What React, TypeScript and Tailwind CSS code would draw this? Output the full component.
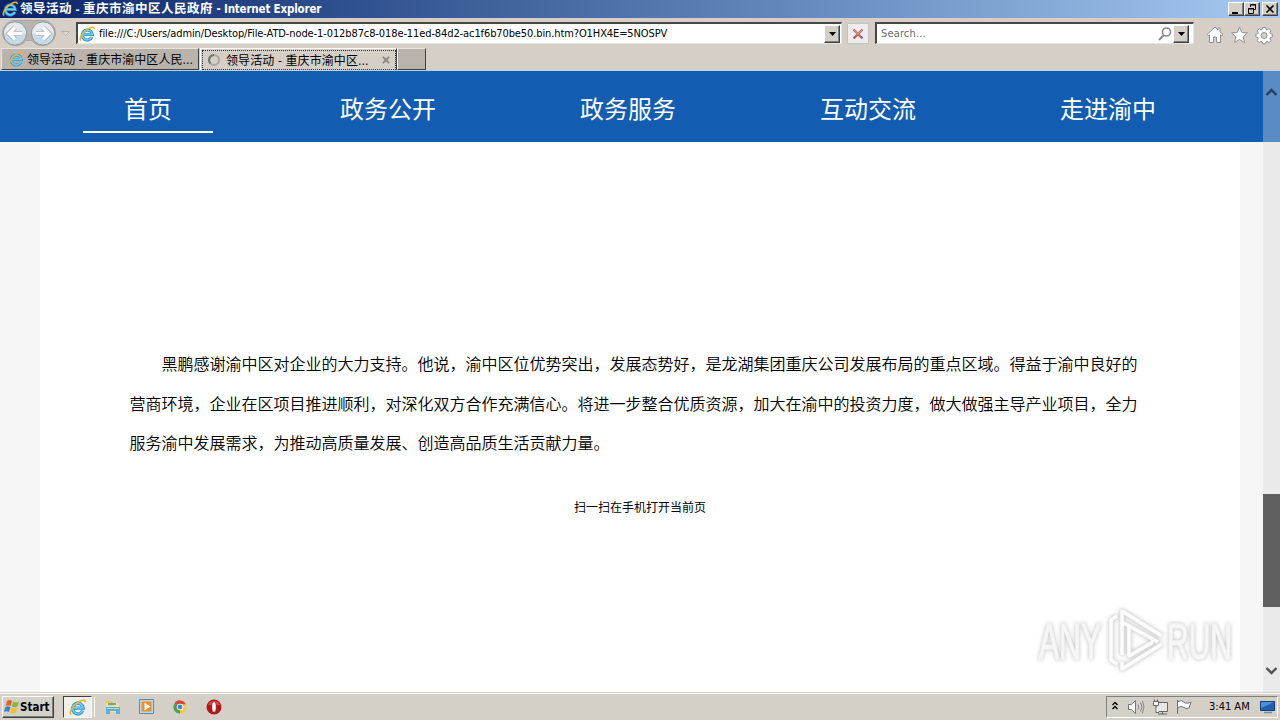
import clsx from 'clsx'

const address = 'file:///C:/Users/admin/Desktop/File-ATD-node-1-012b87c8-018e-11ed-84d2-ac1f6b70be50.bin.htm?O1HX4E=5NOSPV'
const menu = ['首页', '政务公开', '政务服务', '互动交流', '走进渝中']
const lines = [
    '黑鹏感谢渝中区对企业的大力支持。他说，渝中区位优势突出，发展态势好，是龙湖集团重庆公司发展布局的重点区域。得益于渝中良好的',
    '营商环境，企业在区项目推进顺利，对深化双方合作充满信心。将进一步整合优质资源，加大在渝中的投资力度，做大做强主导产业项目，全力',
    '服务渝中发展需求，为推动高质量发展、创造高品质生活贡献力量。',
]

const raised = 'border border-t-white border-l-white border-r-[#404040] border-b-[#404040] bg-[#d4d0c8] shadow-[inset_-1px_-1px_0_#808080]'

function IeIcon({ size = 16, className = '' }: { size?: number; className?: string }) {
    return (
        <svg width={size} height={size} viewBox="0 0 16 16" className={clsx('shrink-0', className)} fill="none">
            <path d="M12.900 11A5 5 0 1 1 13.300 8.500H4.500" stroke="#2a8acb" strokeWidth="3.100" />
            <path d="M12.800 10.900A4.900 4.900 0 1 1 13.200 8.400H4.500" stroke="#6fcdf2" strokeWidth="1.700" />
            <path d="M2.200 14.500C-.5 13 2.800 7.600 7.200 4.200 11 1.200 15.700-.4 15.200 3.200" stroke="#e9b524" strokeWidth="1.500" />
        </svg>
    )
}

function DropButton({ className }: { className?: string }) {
    return (
        <div className={clsx('flex items-center justify-center shrink-0', raised, className)}>
            <svg width="7" height="4" viewBox="0 0 7 4"><path d="M0 0h7L3.500 4z" fill="#000" /></svg>
        </div>
    )
}

function TitleBar() {
    return (
        <div className="h-[18px] flex items-center pl-[2px] pr-[2px] bg-linear-to-r from-[#0a246a] to-[#a6caf0]">
            <IeIcon size={16} />
            <div className="ml-[2px] flex-1 whitespace-pre leading-[18px] font-bold text-white [font-family:'DejaVu_Sans_Condensed','DejaVu_Sans','Noto_Sans_CJK_SC',sans-serif] [font-stretch:condensed]">
                <span className="text-[12.5px] tracking-[0.5px]">领导活动</span>
                <span className="text-[11px]"> - </span>
                <span className="text-[12.5px] tracking-[0.5px]">重庆市渝中区人民政府</span>
                <span className="text-[11.5px] tracking-[-0.18px]"> - Internet Explorer</span>
            </div>
            <div className={clsx('w-[16px] h-[14px]', raised)}>
                <svg width="14" height="12" viewBox="0 0 14 12"><path d="M3 9h6v2H3z" /></svg>
            </div>
            <div className={clsx('w-[16px] h-[14px]', raised)}>
                <svg width="14" height="12" viewBox="0 0 14 12" fill="none" stroke="#000"><path d="M5.500 4V1.500h5v5H9M5 2h6M3.500 5.500h5v5h-5zM3 6h6" /></svg>
            </div>
            <div className={clsx('w-[16px] h-[14px] ml-[2px]', raised)}>
                <svg width="14" height="12" viewBox="0 0 14 12" fill="none" stroke="#000" strokeWidth="1.600"><path d="M3.500 2.500l7 7M10.500 2.500l-7 7" /></svg>
            </div>
        </div>
    )
}

function NavArrows() {
    return (
        <svg width="74" height="30" viewBox="0 0 74 30" className="shrink-0 self-start" fill="none">
            <path d="M15 2.500h28a12.500 12.500 0 0 1 0 25q-8 0-11-5h-6q-3 5-11 5a12.500 12.500 0 0 1 0-25z" fill="#b7b4b1" stroke="#aaa7a4" />
            {[15, 43].map((x) => (
                <g key={x}>
                    <circle cx={x} cy="15.500" r="11.500" fill="#d3dbe2" stroke="#8f9499" />
                    <path d={`M${x - 11} 15.500a11 11 0 0 1 22 0z`} fill="#e6e9ec" />
                    <path d={`M${x - 10} 19a10.500 10.500 0 0 0 20 0z`} fill="#c4dcea" />
                </g>
            ))}
            <path d="M22 15.500H10M15 9.500l-6 6 6 6" stroke="#a5aeb5" strokeWidth="5" />
            <path d="M22 15.500H10M15 9.500l-6 6 6 6" stroke="#fff" strokeWidth="3.400" />
            <path d="M36 15.500h12M43 9.500l6 6-6 6" stroke="#a5aeb5" strokeWidth="5" />
            <path d="M36 15.500h12M43 9.500l6 6-6 6" stroke="#fff" strokeWidth="3.400" />
            <path d="M61.500 13.500h8l-4 4z" fill="#dedad5" stroke="#b5b0aa" />
        </svg>
    )
}

function AddressBar() {
    return (
        <div className="h-[30px] flex items-start">
            <NavArrows />
            <div className="mt-[4px] ml-[2px] w-[766px] h-[22px] flex items-center bg-white border-t-2 border-l-2 border-[#4a4642] border-r border-b border-r-[#e8e4e0] border-b-[#e8e4e0]">
                <IeIcon className="ml-[1px]" />
                <div className="ml-[4px] flex-1 whitespace-nowrap text-[11px] leading-[18px] text-black tracking-[-0.105px] [font-family:'DejaVu_Sans_Condensed','DejaVu_Sans',sans-serif] [font-stretch:condensed]">{address}</div>
                <DropButton className="w-[16px] h-[18px] mr-[1px]" />
            </div>
            <div className="mt-[5px] ml-[5px] w-[22px] h-[21px] bg-[#eeeded] border border-[#c4c1be] flex items-center justify-center">
                <svg width="12" height="12" viewBox="0 0 12 12" fill="none">
                    <path d="M1.500 1.500l9 9M10.500 1.500l-9 9" stroke="#a9646a" strokeWidth="2.400" />
                    <path d="M2 2l4 4 4-4" stroke="#e8888b" strokeWidth="1.300" />
                </svg>
            </div>
            <div className="mt-[4px] ml-[6px] w-[319px] h-[22px] flex items-center bg-white border-t-2 border-l-2 border-[#4a4642] border-r border-b border-r-[#e8e4e0] border-b-[#e8e4e0]">
                <div className="ml-[4px] flex-1 text-[11px] leading-[18px] text-[#6d6d6d] tracking-[0.15px] [font-family:'DejaVu_Sans_Condensed','DejaVu_Sans',sans-serif] [font-stretch:condensed]">Search...</div>
                <svg width="14" height="14" viewBox="0 0 14 14" fill="none" stroke="#8a8a8a"><circle cx="8.500" cy="5" r="4" strokeWidth="1.600" /><path d="M5.500 8.500L1 13" strokeWidth="2.200" /></svg>
                <DropButton className="w-[16px] h-[18px] ml-[1px] mr-[4px]" />
            </div>
            <svg width="74" height="24" viewBox="0 0 74 24" className="mt-[5px] ml-[9px] shrink-0" fill="#fff" stroke="#929090">
                <path d="M4 11.500L12 4l3 2.800V5h2v3.700l3 2.800-1.300 1.300-1.200-1V19.500H13.500V14h-3v5.500H6.500v-7.700l-1.200 1z" />
                <path d="M36.500 4l2.300 5.500 5.700.4-4.300 3.900 1.300 5.700-5-3-5 3 1.300-5.700-4.300-3.900 5.700-.4z" />
                <path d="M59.600 4.500h3l.5 2 1 .4 1.900-1.200 2 2-1.100 1.900.4 1 2 .5v3l-2 .5-.4 1 1.100 1.900-2 2-1.900-1.100-1 .4-.5 2h-3l-.5-2-1-.4-1.900 1.100-2-2 1.100-1.900-.4-1-2-.5v-3l2-.5.4-1-1.100-1.900 2-2 1.900 1.200 1-.4z" />
                <circle cx="61.100" cy="12.500" r="3" fill="#d4d0c8" />
            </svg>
        </div>
    )
}

function Tabs() {
    const text = "pt-px whitespace-pre text-[12px] leading-[20px] text-black [font-family:'DejaVu_Sans_Condensed','Noto_Sans_CJK_SC',sans-serif] [font-stretch:condensed]"
    return (
        <div className="h-[23px] flex items-start pl-[1px] border-b border-[#b9d3e6]">
            <div className="w-[198px] h-[22px] flex items-center pl-[6px] bg-[#bab3ac] border border-t-[#e8e4e0] border-l-[#e8e4e0] border-r-[#404040] border-b-[#404040]">
                <IeIcon className="opacity-80" />
                <span className={clsx(text, 'ml-[3px] tracking-[0.05px]')}>领导活动 - 重庆市渝中区人民...</span>
            </div>
            <div className="ml-[1px] w-[197px] h-[22px] pt-[1px] pl-[1px] border-l border-t border-white border-r border-r-[#404040]">
                <div className="w-[194px] h-[20px] flex items-center pl-[4px] border border-dotted border-[#333]">
                    <svg width="14" height="14" viewBox="0 0 14 14" fill="none" className="shrink-0"><circle cx="7" cy="7" r="5" stroke="#aaa7a3" strokeWidth="2.200" /><path d="M3.500 10.500A5 5 0 0 1 7 2" stroke="#777471" strokeWidth="2" /></svg>
                    <span className={clsx(text, 'ml-[5px] flex-1 tracking-[0.1px]')}>领导活动 - 重庆市渝中区...</span>
                    <svg width="8" height="8" viewBox="0 0 9 9" className="mr-[5px]" fill="none" stroke="#85817d" strokeWidth="1.800"><path d="M1 1l7 7M8 1l-7 7" /></svg>
                </div>
            </div>
            <div className="w-[29px] h-[22px] bg-[#bab3ac] border border-t-[#e8e4e0] border-l-white border-r-[#404040] border-b-[#404040]" />
        </div>
    )
}

function Watermark() {
    return (
        <svg width="246" height="72" viewBox="0 0 246 72" className="absolute left-[1034px] top-[533px] drop-shadow-[0_0_2px_rgba(0,0,0,0.25)]">
            <g fill="#f7f7f7" stroke="#f3f3f3" strokeWidth="1.600" fontFamily="'Liberation Sans Narrow','Liberation Sans',sans-serif" fontSize="50">
                <text x="5" y="55" textLength="62" lengthAdjust="spacingAndGlyphs">ANY</text>
                <text x="133" y="55" textLength="65" lengthAdjust="spacingAndGlyphs">RUN</text>
            </g>
            <g fill="none" stroke="#e2e2e2" strokeWidth="4.500" strokeLinejoin="round">
                <path d="M83 12l-6 4v40l6 4" />
                <path d="M88 51V7l40 25M88 18l36 20M95 21v31l24-14M88 58v7l40-25" />
            </g>
            <g fill="none" stroke="#fcfcfc" strokeWidth="3.400" strokeLinejoin="round">
                <path d="M83 12l-6 4v40l6 4" />
                <path d="M88 51V7l40 25M88 18l36 20M95 21v31l24-14M88 58v7l40-25" />
            </g>
        </svg>
    )
}

function Page() {
    return (
        <div className="relative h-[621px] flex bg-[#f6f6f6]">
            <div className="w-[1263px] h-full">
                <div className="h-[71px] flex pl-[28px] bg-[#125cb1]">
                    {menu.map((item, i) => (
                        <div key={item} className="w-[240px] flex justify-center">
                            <div className={clsx("w-[130px] h-[62px] text-center text-[24px] leading-[74px] text-white [font-family:'Noto_Sans_CJK_SC',sans-serif]", i === 0 && 'border-b-2 border-white')}>{item}</div>
                        </div>
                    ))}
                </div>
                <div className="ml-[40px] w-[1200px] h-[550px] bg-white text-black [font-family:'Noto_Sans_CJK_SC',sans-serif]">
                    <div className="pt-[202px] pl-[89.5px] text-[16px] leading-[39.5px] font-[350]">
                        {lines.map((line, i) => (
                            <div key={line} className={clsx('whitespace-nowrap', i === 0 && 'indent-[32px]')}>{line}</div>
                        ))}
                    </div>
                    <div className="mt-[34px] text-center text-[12px] leading-[20px]">扫一扫在手机打开当前页</div>
                </div>
            </div>
            <div className="w-[17px] h-full flex flex-col bg-[#eaeaea]">
                <div className="h-[71px] pt-[17px] bg-[#5a8bc4]">
                    <svg width="17" height="9" viewBox="0 0 17 9" fill="none" stroke="#24405f" strokeWidth="2.400"><path d="M3.500 7l5-5 5 5" /></svg>
                </div>
                <div className="mt-[352px] h-[113px] bg-[#606060]" />
                <svg width="17" height="9" viewBox="0 0 17 9" className="mt-[59px]" fill="none" stroke="#505050" strokeWidth="2.400"><path d="M3.500 2l5 5 5-5" /></svg>
            </div>
            <Watermark />
        </div>
    )
}

function Taskbar() {
    return (
        <div className="h-[28px] flex items-center bg-[#d4d0c8] border-t border-[#d4d0c8] shadow-[inset_0_1px_0_#fff]">
            <div className={clsx('ml-[2px] mt-[1px] w-[52px] h-[22px] flex items-center', raised)}>
                <svg width="16" height="16" viewBox="0 0 16 16" className="ml-[1px] shrink-0">
                    <path d="M3 2q3-2 5 0L6.700 7q-2.500-1.600-5 0z" fill="#e9602c" />
                    <path d="M9 2.600q3 1.500 6-.2L13.500 7.500q-3 1.500-5.700 0z" fill="#83b93e" />
                    <path d="M1.400 8q2.600-1.600 5 0L5 13q-2.500-1.700-5 0z" fill="#3681c7" />
                    <path d="M7.500 8.600q3 1.500 5.700 0L12 13.500q-3 1.700-5.900 0z" fill="#f4bd2b" />
                </svg>
                <span className="text-[11.5px] leading-[18px] font-bold text-black [font-family:'DejaVu_Sans_Condensed','DejaVu_Sans',sans-serif] [font-stretch:condensed]">Start</span>
            </div>
            <div className="ml-[9px] mt-[1px] w-[29px] h-[22px] flex items-center justify-center bg-[#f1efec] border border-t-[#404040] border-l-[#404040] border-r-white border-b-white">
                <IeIcon size={17} />
            </div>
            <div className="ml-[2px] w-px h-[20px] bg-white" />
            <svg width="18" height="18" viewBox="0 0 18 18" className="ml-[9px]">
                <path d="M2 3h6l1 2h6v4H2z" fill="#e9c65c" />
                <path d="M2 5h13v9H2z" fill="#f5dfa0" />
                <path d="M4 5h8v2H4z" fill="#79a873" />
                <path d="M2 9h14v7h-4v-3H6v3H2z" fill="#62add3" />
                <path d="M3 10h12v1H3z" fill="#a9daea" />
            </svg>
            <svg width="18" height="18" viewBox="0 0 18 18" className="ml-[16px]">
                <path d="M1.500 1.500h14v14h-14z" fill="#b8d8ef" stroke="#568bb8" />
                <path d="M3.500 3.500h10v10h-10z" fill="#f18c24" />
                <path d="M6.500 4.500l6 4-6 4z" fill="#fff" />
            </svg>
            <svg width="16" height="16" viewBox="0 0 16 16" className="ml-[16px]">
                <path d="M8 8L2.400 4.500A6.500 6.500 0 0 1 14 5.500H8z" fill="#d94437" />
                <path d="M8 8v6.500A6.500 6.500 0 0 1 2.400 4.500z" fill="#4ca152" />
                <path d="M8 8h0l0 6.500a6.500 6.500 0 0 0 6-9H8z" fill="#f4cd3e" />
                <circle cx="8" cy="8" r="3.200" fill="#fff" />
                <circle cx="8" cy="8" r="2.400" fill="#4782d5" />
            </svg>
            <svg width="16" height="16" viewBox="0 0 16 16" className="ml-[18px]">
                <circle cx="8" cy="8" r="7.500" fill="#b3171c" />
                <path d="M2 6a6.500 6.500 0 0 1 12 0z" fill="#d64c4d" />
                <ellipse cx="8" cy="8" rx="2.200" ry="5.300" fill="#fff" stroke="#7f0d10" strokeWidth=".6" />
            </svg>
            <div className="ml-auto mr-[2px] mt-[1px] w-[172px] h-[22px] flex items-center border border-t-[#808080] border-l-[#808080] border-r-white border-b-white">
                <svg width="82" height="18" viewBox="0 0 82 18" className="ml-[4px] shrink-0" fill="none">
                    <path d="M1.500 7l2.500-2.500L6.500 7M1.500 11L4 8.500 6.500 11" stroke="#000" strokeWidth="1.400" />
                    <path d="M17.500 6.500h3l4-4v13l-4-4h-3z" fill="#fff" stroke="#777" />
                    <path d="M27 6.500q1.500 2.500 0 5M29.500 4.500q3 4.500 0 9M31.500 3q3 6 0 12" stroke="#858585" />
                    <path d="M45.500 4.500h11v9h-11zM47 16h9M51.500 13v3" fill="#e7e7e7" stroke="#666" />
                    <path d="M42.500 3.500h5v4h-5zM45 7.500v7h3M43.500 1.500v2M46.500 1.500v2" fill="#fff" stroke="#666" />
                    <path d="M66.500 2v14M67 3.500q4-2 6 .5t7 0l-2 6q-3 1.500-5-.5t-6 0" fill="#fff" stroke="#707070" />
                </svg>
                <span className="ml-[16px] w-[42px] whitespace-nowrap text-[11px] leading-[18px] text-black [font-family:'DejaVu_Sans_Condensed','DejaVu_Sans',sans-serif] [font-stretch:condensed]">3:41 AM</span>
                <svg width="16" height="16" viewBox="0 0 16 16" className="ml-[9px] shrink-0">
                    <path d="M.5 2.500h14v9H.5z" fill="#215fae" stroke="#123d7c" />
                    <path d="M1 3h13L1 9z" fill="#4b91d7" />
                    <path d="M4 13.500h8" stroke="#6f8eae" strokeWidth="1.500" />
                </svg>
            </div>
        </div>
    )
}

export default function App() {
    return (
        <div className="w-[1280px] h-[720px] overflow-hidden bg-[#d5cfc7]">
            <TitleBar />
            <AddressBar />
            <Tabs />
            <Page />
            <Taskbar />
        </div>
    )
}
